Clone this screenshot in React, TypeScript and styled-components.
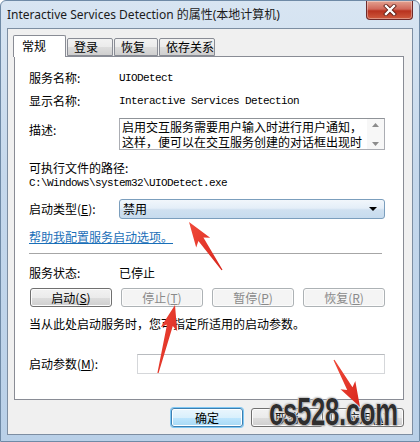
import styled, { createGlobalStyle } from "styled-components";

const GlobalStyle = createGlobalStyle`
  html, body { margin: 0; padding: 0; background: #fff; }
  body { font-family: "Noto Sans CJK SC", "Noto Sans", sans-serif; }
`;

const CJK = `"Noto Sans CJK SC", "Noto Sans", sans-serif`;
const MONO = `"Liberation Mono", "Noto Sans CJK SC", monospace`;

const Frame = styled.div`
  position: relative;
  width: 420px;
  height: 442px;
  box-sizing: border-box;
  padding: 0 6px 6px 6px;
  display: flex;
  flex-direction: column;
  border: 1px solid #6f8aa6;
  border-radius: 6px 6px 0 0;
  background: linear-gradient(180deg, #d8e5f2 0%, #c5d8ec 40%, #b9d0e8 100%);
  overflow: hidden;
`;

const TitleBar = styled.div`
  height: 27px;
  display: flex;
  align-items: flex-start;
  justify-content: space-between;
`;

const Title = styled.div`
  margin-top: 6px;
  font-family: "Noto Sans", "Noto Sans CJK SC", sans-serif;
  font-size: 12px;
  line-height: 16px;
  color: #1b1b1b;
  white-space: nowrap;
`;

const CloseButton = styled.div`
  width: 47px;
  height: 19px;
  margin-right: 0px;
  box-sizing: border-box;
  border: 1px solid #6e2a2a;
  border-top: none;
  border-radius: 0 0 4px 4px;
  background: linear-gradient(180deg, #e3a291 0%, #d0685a 45%, #b8321f 55%, #cf5a3e 100%);
  display: flex;
  align-items: center;
  justify-content: center;
  box-shadow: inset 0 0 0 1px rgba(255, 255, 255, 0.35);
`;

const Client = styled.div`
  flex: 1;
  background: #f0f0f0;
  border: 1px solid #7d8ea2;
  padding: 6px 8px 0 5px;
  display: flex;
  flex-direction: column;
`;

const TabStrip = styled.div`
  height: 21px;
  display: flex;
  align-items: flex-end;
`;

const Tab = styled.div<{ $active?: boolean; $w: number }>`
  position: relative;
  z-index: ${(p) => (p.$active ? 2 : 1)};
  width: ${(p) => p.$w}px;
  height: ${(p) => (p.$active ? 22 : 18)}px;
  margin-bottom: ${(p) => (p.$active ? -1 : 0)}px;
  margin-left: ${(p) => (p.$active ? 0 : 1)}px;
  box-sizing: border-box;
  border: 1px solid #898c95;
  border-bottom: ${(p) => (p.$active ? "none" : "1px solid #898c95")};
  border-radius: 2px 2px 0 0;
  background: ${(p) =>
    p.$active ? "#ffffff" : "linear-gradient(180deg, #f2f2f2 0%, #ebebeb 50%, #dddddd 51%, #cfcfcf 100%)"};
  font-family: ${CJK};
  font-size: 12px;
  line-height: ${(p) => (p.$active ? 20 : 16)}px;
  padding-left: ${(p) => (p.$active ? 8 : 6)}px;
  color: #000;
`;

const Panel = styled.div`
  margin-left: 1px;
  width: 390px;
  height: 344px;
  box-sizing: border-box;
  background: #fff;
  border: 1px solid #898c95;
  padding: 11px 18px 0 14px;
  display: flex;
  flex-direction: column;
  font-family: ${CJK};
  font-size: 12px;
  color: #000;
`;

const Row = styled.div<{ $mt?: number; $h?: number; $top?: boolean }>`
  display: flex;
  align-items: ${(p) => (p.$top ? "flex-start" : "center")};
  margin-top: ${(p) => p.$mt ?? 0}px;
  min-height: ${(p) => p.$h ?? 20}px;
`;

const Label = styled.div<{ $w?: number; $pt?: number }>`
  width: ${(p) => p.$w ?? 90}px;
  flex-shrink: 0;
  line-height: 14px;
  padding-top: ${(p) => p.$pt ?? 0}px;
  white-space: nowrap;
`;

const Mono = styled.div`
  font-family: ${MONO};
  font-size: 11px;
  letter-spacing: -0.6px;
  line-height: 14px;
  white-space: nowrap;
`;

const Line = styled.div<{ $mt?: number }>`
  margin-top: ${(p) => p.$mt ?? 0}px;
  line-height: 14px;
  white-space: nowrap;
`;

const DescBox = styled.div`
  width: 266px;
  height: 32px;
  box-sizing: border-box;
  border: 1px solid #abadb3;
  border-top-color: #8f9398;
  display: flex;
  background: #fff;
`;

const DescText = styled.div`
  flex: 1;
  padding: 0 0 0 2px;
  line-height: 15px;
  white-space: nowrap;
  overflow: hidden;
`;

const ScrollBar = styled.div`
  width: 17px;
  display: flex;
  flex-direction: column;
  justify-content: space-between;
  align-items: center;
  background: #f7f7f7;
  padding: 4px 0 3px;
  box-sizing: border-box;
`;

const Select = styled.div`
  width: 266px;
  height: 20px;
  box-sizing: border-box;
  border: 1px solid #7b9ebd;
  border-radius: 3px;
  background: linear-gradient(180deg, #f1f6fb 0%, #e4eef8 45%, #cfe0f0 55%, #c6dbee 100%);
  display: flex;
  align-items: center;
  justify-content: space-between;
  padding: 0 7px 0 3px;
  line-height: 14px;
`;

const Link = styled.div<{ $mt?: number }>`
  margin-top: ${(p) => p.$mt ?? 0}px;
  line-height: 14px;
  color: #1a6fb8;
  text-decoration: underline;
  align-self: flex-start;
`;

const Separator = styled.div`
  margin-top: 9px;
  height: 1px;
  width: 353px;
  background: #a6a6a6;
`;

const ButtonRow = styled.div`
  margin-top: 8px;
  display: flex;
  gap: 9px;
  padding-left: 1px;
`;

const Button = styled.div<{ $disabled?: boolean; $default?: boolean; $w?: number }>`
  width: ${(p) => p.$w ?? 82}px;
  height: 19px;
  box-sizing: border-box;
  border-radius: 3px;
  border: 1px solid ${(p) => (p.$default ? "#3c7fb1" : p.$disabled ? "#adb2b5" : "#707070")};
  background: ${(p) =>
    p.$default
      ? "linear-gradient(180deg, #eaf6fd 0%, #d9f0fc 50%, #bee6fd 51%, #a7d9f5 100%)"
      : p.$disabled
      ? "#f4f4f4"
      : "linear-gradient(180deg, #f2f2f2 0%, #ebebeb 50%, #dddddd 51%, #cfcfcf 100%)"};
  box-shadow: ${(p) => (p.$default ? "0 0 0 1px #7fc8f4, inset 0 0 0 1px #ffffff" : "inset 0 0 0 1px #fcfcfc")};
  color: ${(p) => (p.$disabled ? "#8a8a8a" : "#000")};
  font-family: ${CJK};
  font-size: 12px;
  display: flex;
  align-items: center;
  justify-content: center;
  line-height: 14px;
`;

const TextInput = styled.div`
  width: 248px;
  height: 20px;
  box-sizing: border-box;
  border: 1px solid #d5d7da;
  border-top-color: #b8bbbf;
  background: #fff;
`;

const Footer = styled.div`
  margin-top: 8px;
  display: flex;
  justify-content: flex-end;
  gap: 8px;
  padding-right: 0px;
`;

const U = styled.span`
  text-decoration: underline;
`;

const Overlay = styled.svg`
  position: absolute;
  left: 0;
  top: 0;
  pointer-events: none;
`;

const Watermark = styled.div`
  position: absolute;
  left: 268px;
  top: 391px;
  font-family: "Liberation Sans", Arial, sans-serif;
  font-weight: bold;
  font-size: 39px;
  line-height: 1;
  color: #2e2e2e;
  transform: scaleX(0.66);
  transform-origin: left top;
  letter-spacing: -0.5px;
  white-space: nowrap;
  pointer-events: none;
  text-shadow: 0 0 1px #fff, 0 0 2px #cfcfcf, 1px 1px 2px #8a8a8a, -1px -1px 2px #bdbdbd;
`;

function arrowPath(tx: number, ty: number, hx: number, hy: number) {
  const dx = hx - tx;
  const dy = hy - ty;
  const len = Math.hypot(dx, dy);
  const ux = dx / len;
  const uy = dy / len;
  const nx = -uy;
  const ny = ux;
  const headLen = 21;
  const headW = 8.5;
  const shaftW = 3;
  const bx = hx - ux * headLen;
  const by = hy - uy * headLen;
  const wx = hx - ux * (headLen + 4);
  const wy = hy - uy * (headLen + 4);
  const pts = [
    [tx + nx * 0.6, ty + ny * 0.6],
    [bx + nx * shaftW, by + ny * shaftW],
    [wx + nx * headW, wy + ny * headW],
    [hx, hy],
    [wx - nx * headW, wy - ny * headW],
    [bx - nx * shaftW, by - ny * shaftW],
    [tx - nx * 0.6, ty - ny * 0.6],
  ];
  return pts.map((p) => p.map((v) => v.toFixed(1)).join(",")).join(" ");
}

const arrows = [
  { t: [221, 269], h: [188, 221] },
  { t: [157, 372], h: [174, 304] },
  { t: [333, 359], h: [359, 406] },
];

export default function App() {
  return (
    <>
      <GlobalStyle />
      <Frame>
        <TitleBar>
          <Title>Interactive Services Detection 的属性(本地计算机)</Title>
          <CloseButton>
            <svg width="14" height="12" viewBox="0 0 14 12">
              <path d="M3 2 L11 10 M11 2 L3 10" stroke="#5a1a12" strokeWidth="4" strokeLinecap="square" />
              <path d="M3 2 L11 10 M11 2 L3 10" stroke="#ffffff" strokeWidth="2.4" strokeLinecap="square" />
            </svg>
          </CloseButton>
        </TitleBar>
        <Client>
          <TabStrip>
            <Tab $active $w={53}>常规</Tab>
            <Tab $w={46}>登录</Tab>
            <Tab $w={44}>恢复</Tab>
            <Tab $w={56}>依存关系</Tab>
          </TabStrip>
          <Panel>
            <Row>
              <Label>服务名称:</Label>
              <Mono>UIODetect</Mono>
            </Row>
            <Row $mt={3}>
              <Label>显示名称:</Label>
              <Mono>Interactive Services Detection</Mono>
            </Row>
            <Row $mt={7} $top>
              <Label $pt={5}>描述:</Label>
              <DescBox>
                <DescText>
                  启用交互服务需要用户输入时进行用户通知，
                  <br />
                  这样，便可以在交互服务创建的对话框出现时
                </DescText>
                <ScrollBar>
                  <svg width="7" height="4" viewBox="0 0 7 4">
                    <path d="M0 4 L3.5 0 L7 4 Z" fill="#8c8c8c" />
                  </svg>
                  <svg width="7" height="4" viewBox="0 0 7 4">
                    <path d="M0 0 L3.5 4 L7 0 Z" fill="#8c8c8c" />
                  </svg>
                </ScrollBar>
              </DescBox>
            </Row>
            <Line $mt={11}>可执行文件的路径:</Line>
            <Mono style={{ marginTop: 1 }}>C:\Windows\system32\UIODetect.exe</Mono>
            <Row $mt={9}>
              <Label>
                启动类型(<U>E</U>):
              </Label>
              <Select>
                <span>禁用</span>
                <svg width="8" height="4" viewBox="0 0 8 4">
                  <path d="M0 0 L8 0 L4 4 Z" fill="#000" />
                </svg>
              </Select>
            </Row>
            <Link $mt={11}>帮助我配置服务启动选项。</Link>
            <Separator />
            <Row $mt={12} $h={14}>
              <Label>服务状态:</Label>
              <Line>已停止</Line>
            </Row>
            <ButtonRow>
              <Button>
                启动(<U>S</U>)
              </Button>
              <Button $disabled>
                停止(<U>T</U>)
              </Button>
              <Button $disabled>
                暂停(<U>P</U>)
              </Button>
              <Button $disabled>
                恢复(<U>R</U>)
              </Button>
            </ButtonRow>
            <Line $mt={10}>当从此处启动服务时，您可指定所适用的启动参数。</Line>
            <Row $mt={23}>
              <Label $w={108}>
                启动参数(<U>M</U>):
              </Label>
              <TextInput />
            </Row>
          </Panel>
          <Footer>
            <Button $default $w={72}>
              确定
            </Button>
            <Button $w={72}>取消</Button>
            <Button $w={73}>
              应用(<U>A</U>)
            </Button>
          </Footer>
        </Client>
        <Overlay width="420" height="442" viewBox="0 0 420 442">
          <defs>
            <linearGradient id="red" x1="0" y1="0" x2="1" y2="1">
              <stop offset="0" stopColor="#f04a3a" />
              <stop offset="1" stopColor="#d8261c" />
            </linearGradient>
          </defs>
          {arrows.map((a, i) => (
            <polygon key={i} points={arrowPath(a.t[0], a.t[1], a.h[0], a.h[1])} fill="url(#red)" />
          ))}
        </Overlay>
        <Watermark>cs528.com</Watermark>
      </Frame>
    </>
  );
}
